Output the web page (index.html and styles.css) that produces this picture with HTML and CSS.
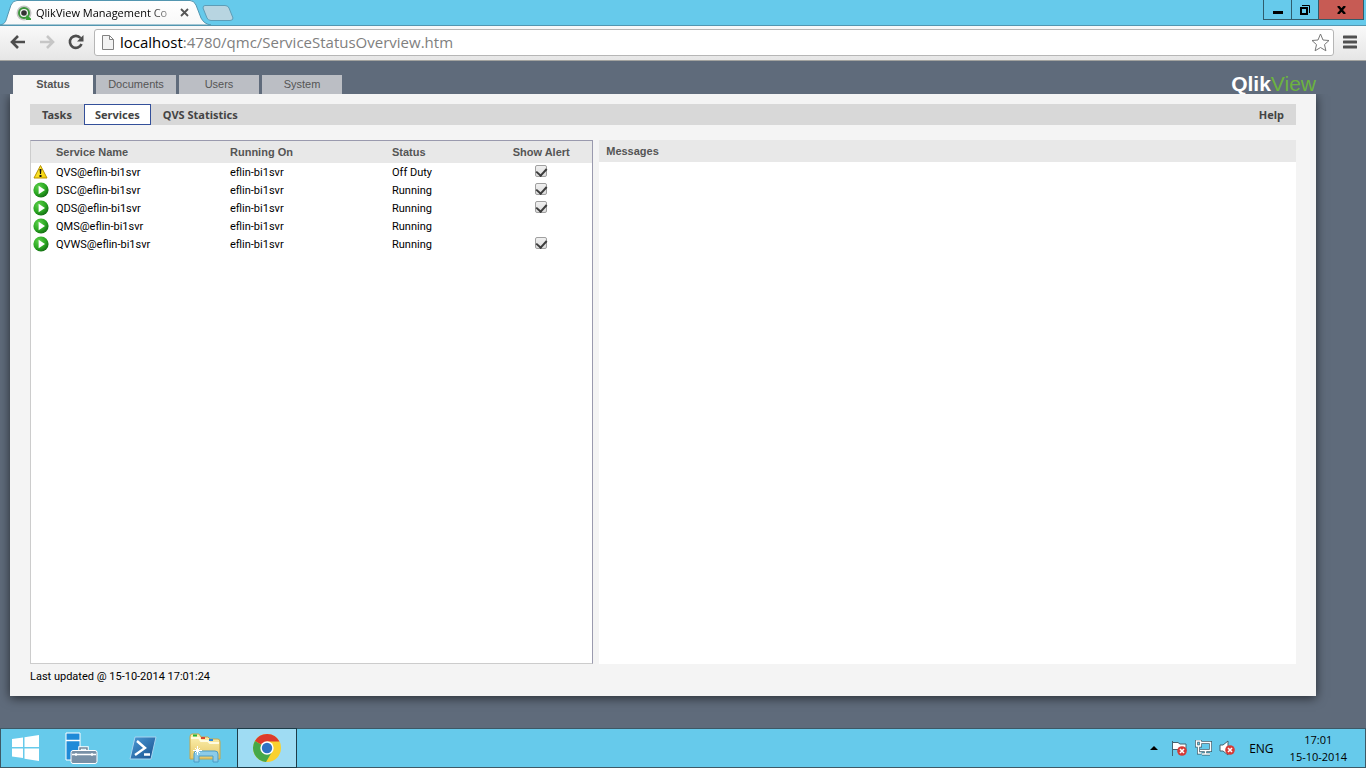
FILE: index.html
```html
<!DOCTYPE html>
<html lang="en">
<head>
<meta charset="utf-8">
<title>QlikView Management Console</title>
<link rel="stylesheet" href="styles.css">
</head>
<body>
<svg class="defs" width="0" height="0" aria-hidden="true">
  <defs>
    <radialGradient id="green" cx=".35" cy=".3" r=".75"><stop offset="0" stop-color="#5cd04a"/><stop offset=".6" stop-color="#2ba822"/><stop offset="1" stop-color="#126b12"/></radialGradient>
    <linearGradient id="yellow" x1="0" y1="0" x2="1" y2="1"><stop offset="0" stop-color="#fff04a"/><stop offset="1" stop-color="#f5d000"/></linearGradient>
    <linearGradient id="strip" x1="0" y1="0" x2="0" y2="1"><stop offset="0" stop-color="#fff"/><stop offset="1" stop-color="#f8f8f8"/></linearGradient>
    <linearGradient id="ps" x1="0" y1="0" x2="1" y2="1"><stop offset="0" stop-color="#4b9bd8"/><stop offset="1" stop-color="#174f8c"/></linearGradient>
    <linearGradient id="folder" x1="0" y1="0" x2="0" y2="1"><stop offset="0" stop-color="#fdf3b4"/><stop offset="1" stop-color="#e6c766"/></linearGradient>
    <symbol id="play" viewBox="0 0 16 16"><circle cx="8" cy="8" r="7.6" fill="url(#green)"/><path d="M5.6 3.8v8.4L12 8z" fill="#fff"/></symbol>
    <symbol id="error" viewBox="0 0 10 10"><circle cx="5" cy="5" r="4.8" fill="#d63a35"/><path d="M3 3l4 4M7 3L3 7" stroke="#fff" stroke-width="1.6"/></symbol>
  </defs>
</svg>

<header class="browser">
  <div class="tabstrip">
    <div class="browser-tab">
      <svg class="tab-shape" width="214" height="25" viewBox="0 0 214 25"><path d="M0 25C6 24 6 20 8 14L11 5Q13 .5 17 .5H190Q194 .5 196 5L201 18Q204 24 211 25z" fill="url(#strip)" stroke="#5396b0"/></svg>
      <svg class="favicon" width="16" height="16" viewBox="0 0 16 16"><circle cx="8" cy="8" r="7.500" fill="#c4c4c4"/><circle cx="8" cy="8" r="5" fill="#f5f5f5" stroke="#3c963c" stroke-width="2"/><path d="M10.500 10l4.500 3.500v1.500h-5" fill="#35a035"/><circle cx="8" cy="8" r="2.800" fill="#333"/></svg>
      <span class="tab-title">QlikView Management Co</span>
      <button class="tab-close" aria-label="Close tab"><svg width="9" height="9" viewBox="0 0 9 9"><path d="M1 1l7 7M8 1L1 8" stroke="#555" stroke-width="1.800"/></svg></button>
    </div>
    <button class="new-tab" aria-label="New tab"><svg width="32" height="16" viewBox="0 0 32 16"><path d="M3 .5H23Q26 .5 27 3L31 13Q31 15.500 28 15.500H9Q6 15.500 5 13L1 3Q1 .5 3 .5z" fill="#b8d5e1" stroke="#5d9db7"/></svg></button>
    <div class="window-controls">
      <button aria-label="Minimize"><svg width="10" height="10" viewBox="0 0 10 10"><path d="M0 6h10v3H0z"/></svg></button>
      <button aria-label="Restore"><svg width="10" height="10" viewBox="0 0 10 10"><path d="M1 3h6v6H1z" fill="none" stroke="#000" stroke-width="2"/><path d="M2 .5h7.500V8" fill="none" stroke="#000"/></svg></button>
      <button class="close" aria-label="Close"><svg width="9" height="8" viewBox="0 0 9 8"><path d="M1 0l7 8M8 0L1 8" stroke="#000" stroke-width="2.400"/></svg></button>
    </div>
  </div>
  <div class="toolbar">
    <button class="tool" aria-label="Back"><svg width="16" height="14" viewBox="0 0 16 14"><path d="M8 1L2 7l6 6M2 7h13" fill="none" stroke="#4d4d4d" stroke-width="2.600"/></svg></button>
    <button class="tool" aria-label="Forward"><svg width="16" height="14" viewBox="0 0 16 14"><path d="M8 1l6 6-6 6M14 7H1" fill="none" stroke="#c6c6c6" stroke-width="2.600"/></svg></button>
    <button class="tool" aria-label="Reload"><svg width="16" height="16" viewBox="0 0 16 16"><path d="M12.500 4A6 6 0 1 0 13.500 10" fill="none" stroke="#4d4d4d" stroke-width="2.600"/><path d="M15.500 1v6.500H9z" fill="#4d4d4d"/></svg></button>
    <div class="omnibox">
      <svg width="12" height="15" viewBox="0 0 12 15"><path d="M.5.5h7l4 4v10H.5zM7.500.5v4h4" fill="#f3f3f3" stroke="#828282"/></svg>
      <a class="url" href="#"><b>localhost</b>:4780/qmc/ServiceStatusOverview.htm</a>
      <button class="star" aria-label="Bookmark"><svg width="19" height="19" viewBox="0 0 19 19"><path d="M9.500 1l2.500 6 6 .5-4.500 4.100 1.400 6.200-5.400-3.300-5.400 3.300 1.400-6.200L1 7.500 7 7z" fill="#fff" stroke="#777" stroke-linejoin="round"/></svg></button>
    </div>
    <button class="menu" aria-label="Menu"><svg width="14" height="14" viewBox="0 0 14 14"><path d="M1 2h12M1 7h12M1 12h12" stroke="#505050" stroke-width="3" stroke-linecap="round"/></svg></button>
  </div>
</header>

<main class="page">
  <div class="top">
    <nav class="tabs">
      <a class="tab active" href="#">Status</a>
      <a class="tab" href="#">Documents</a>
      <a class="tab" href="#">Users</a>
      <a class="tab" href="#">System</a>
    </nav>
    <div class="logo"><b>Qlik</b><span>View</span></div>
  </div>
  <section class="panel">
    <nav class="subnav">
      <a href="#">Tasks</a>
      <a class="current" href="#">Services</a>
      <a href="#">QVS Statistics</a>
      <a class="help" href="#">Help</a>
    </nav>
    <div class="columns">
      <div class="services">
        <table>
          <colgroup><col class="c-icon"><col class="c-name"><col class="c-host"><col class="c-status"><col class="c-alert"></colgroup>
          <thead><tr><th></th><th>Service Name</th><th>Running On</th><th>Status</th><th class="alert">Show Alert</th></tr></thead>
          <tbody>
            <tr><td><svg width="16" height="16" viewBox="0 0 16 16"><path d="M7.500 1.500L14 14H1z" fill="url(#yellow)" stroke="#b99300" stroke-linejoin="round"/><path d="M6.500 5h2L8 10H7zM6.500 11h2v2h-2z" fill="#111"/></svg></td><td>QVS@eflin-bi1svr</td><td>eflin-bi1svr</td><td>Off Duty</td><td class="alert"><input type="checkbox" aria-label="Show alert for QVS" checked></td></tr>
            <tr><td><svg width="16" height="16"><use href="#play"/></svg></td><td>DSC@eflin-bi1svr</td><td>eflin-bi1svr</td><td>Running</td><td class="alert"><input type="checkbox" aria-label="Show alert for DSC" checked></td></tr>
            <tr><td><svg width="16" height="16"><use href="#play"/></svg></td><td>QDS@eflin-bi1svr</td><td>eflin-bi1svr</td><td>Running</td><td class="alert"><input type="checkbox" aria-label="Show alert for QDS" checked></td></tr>
            <tr><td><svg width="16" height="16"><use href="#play"/></svg></td><td>QMS@eflin-bi1svr</td><td>eflin-bi1svr</td><td>Running</td><td></td></tr>
            <tr><td><svg width="16" height="16"><use href="#play"/></svg></td><td>QVWS@eflin-bi1svr</td><td>eflin-bi1svr</td><td>Running</td><td class="alert"><input type="checkbox" aria-label="Show alert for QVWS" checked></td></tr>
          </tbody>
        </table>
      </div>
      <div class="messages"><h2>Messages</h2></div>
    </div>
    <p class="updated">Last updated @ 15-10-2014 17:01:24</p>
  </section>
</main>

<footer class="taskbar">
  <button class="start" aria-label="Start"><svg width="28" height="26" viewBox="0 0 28 26"><path d="M0 4l11-1.500V12H0zM12.500 2.200L27 0v12H12.500zM0 13.500h11V23L0 21.500zM12.500 13.500H27V26l-14.500-2.200z" fill="#fff"/></svg></button>
  <button class="app" aria-label="Server Manager"><svg width="34" height="32" viewBox="0 0 34 32"><path d="M2 1h14v27H2z" fill="#1f8ad8" stroke="#fff"/><path d="M2 8.500h14" stroke="#fff" stroke-width="1.500"/><path d="M16 19v-3h7v3" fill="none" stroke="#fff" stroke-width="3.500"/><path d="M16 19v-3h7v3" fill="none" stroke="#71869b" stroke-width="1.500"/><rect x="7" y="18.500" width="26" height="13" rx="2" fill="#7890a6" stroke="#fff"/><path d="M8 22.500h24M12 21v3M28 21v3" stroke="#fff" stroke-width="1.300"/></svg></button>
  <button class="app" aria-label="PowerShell"><svg width="28" height="24" viewBox="0 0 28 24"><path d="M6 1h21l-5 22H1z" fill="url(#ps)" stroke="#a8d4ef" stroke-linejoin="round"/><path d="M8 5l8 7-10 7M15 18.500h6" fill="none" stroke="#fff" stroke-width="2.400"/></svg></button>
  <button class="app" aria-label="File Explorer"><svg width="34" height="30" viewBox="0 0 34 30"><path d="M2 26V4q0-3 2-3h7l2 3h7l2 2h8q2 0 2 3v17z" fill="url(#folder)" stroke="#c6a64b"/><path d="M3 5h8l2 3h7l2 2h9" fill="none" stroke="#fffbe0" stroke-width="2"/><path d="M5 2.500h4" stroke="#1fb53a" stroke-width="2"/><path d="M13 5h4" stroke="#d8452e" stroke-width="2"/><path d="M21 7h4" stroke="#2888e0" stroke-width="2"/><path d="M6 29V21q0-3 3-3h18q3 0 3 3v8h-5v-6H11v6z" fill="#8ccbe8" stroke="#4a9cc6"/><path d="M9.500 13v9M5 17.500h9M7 15l5 5M12 15l-5 5" stroke="#fff"/></svg></button>
  <button class="app running" aria-label="Chrome"><svg width="30" height="30" viewBox="0 0 30 30"><circle cx="15" cy="15" r="14" fill="#f9d12f"/><path d="M15 15L2.900 8A14 14 0 0 1 27.500 8.500H15z" fill="#dc3a2c"/><path d="M15 15L2.900 8A14 14 0 0 0 14 29l6.500-11z" fill="#45a849"/><circle cx="15" cy="15" r="6.700" fill="#fff"/><circle cx="15" cy="15" r="5.200" fill="#2e72c4"/></svg></button>
  <div class="tray">
    <svg width="8" height="4" viewBox="0 0 8 4"><path d="M0 4l4-4 4 4z"/></svg>
    <svg width="17" height="17" viewBox="0 0 17 17"><path d="M1.500 1v15M2 2.500h5l2 1.500h6v7H9L7 9.500H2" fill="#fff" stroke="#45636f"/><use href="#error" x="6" y="6" width="10" height="10"/></svg>
    <svg width="17" height="16" viewBox="0 0 17 16"><path d="M6 2.500h9.500v8H5M10.500 10.500v3M7 14h8M1.500 1h4v5h-4zM3.500 6v7h3" fill="none" stroke="#395d6b" stroke-width="3"/><path d="M6 2.500h9.500v8H5M10.500 10.500v3M7 14h8M1.500 1h4v5h-4zM3.500 6v7h3" fill="none" stroke="#fff" stroke-width="1.500"/></svg>
    <svg width="17" height="16" viewBox="0 0 17 16"><path d="M1 5h3l5-4v14l-5-4H1z" fill="#fff" stroke="#45636f"/><use href="#error" x="6" y="5" width="10" height="10"/></svg>
    <span class="lang">ENG</span>
    <div class="clock"><span>17:01</span><span>15-10-2014</span></div>
  </div>
</footer>
</body>
</html>
```

FILE: styles.css
```css
* { box-sizing: border-box; }
body {
  margin: 0;
  min-height: 100vh;
  display: flex;
  flex-direction: column;
  background: #5f6b7b;
  font-family: Roboto, "Noto Sans", sans-serif;
  font-size: 11px;
  color: #000;
}
button { border: 0; padding: 0; background: none; font: inherit; display: flex; align-items: center; justify-content: center; }
a { color: inherit; text-decoration: none; }
svg { display: block; flex: none; }
.defs { position: absolute; }

.browser { background: #66caeb; }
.tabstrip { display: flex; height: 25px; }
.browser-tab { position: relative; display: flex; align-items: center; width: 202px; padding-left: 16px; }
.tab-shape { position: absolute; left: 0; top: 0; }
.favicon, .tab-title, .tab-close { position: relative; }
.tab-title {
  width: 140px;
  margin-left: 4px;
  white-space: nowrap;
  font: 11px "Open Sans", sans-serif;
  -webkit-mask-image: linear-gradient(to right, #000 112px, transparent 145px);
  mask-image: linear-gradient(to right, #000 112px, transparent 145px);
}
.tab-close { margin-left: 4px; }
.new-tab { align-self: flex-start; margin-top: 5px; }
.window-controls { display: flex; height: 20px; margin-left: auto; margin-right: 2px; border: 1px solid #2f5d6d; border-top: 0; }
.window-controls button { width: 27px; }
.window-controls button + button { border-left: 1px solid #2f5d6d; }
.window-controls .close { width: 45px; background: #c75b54; }
.toolbar {
  display: flex;
  align-items: center;
  height: 36px;
  padding: 0 8px 2px 9px;
  border-top: 1px solid #5396b0;
  border-bottom: 1px solid #a3a39f;
  background: linear-gradient(#f9f9f9, #e6e6e6);
}
.tool { width: 17px; margin-right: 12px; }
.omnibox {
  flex: 1;
  display: flex;
  align-items: center;
  height: 27px;
  margin-left: -2px;
  padding: 0 3px 0 7px;
  border: 1px solid #b6b6b6;
  border-radius: 3px;
  background: #fff;
}
.url { flex: 1; margin-left: 6px; font: 15px "Open Sans", sans-serif; color: #808080; }
.url b { font-weight: 400; color: #000; }
.menu { width: 16px; margin-left: 8px; }

.page { flex: 1; display: flex; flex-direction: column; padding: 14px 50px 32px 10px; }
.top { display: flex; justify-content: space-between; height: 19px; padding-left: 3px; }
.tabs { display: flex; gap: 3px; }
.tab { width: 80px; background: #bbbec4; color: #555; font: 11px/19px "Liberation Sans", sans-serif; text-align: center; }
.tab.active { background: #f4f4f4; font-weight: 700; }
.logo { font: 21px/17px "Liberation Sans", sans-serif; color: #fff; }
.logo span { color: #6cb33f; }
.panel {
  flex: 1;
  display: flex;
  flex-direction: column;
  padding: 10px 20px 12px;
  background: #f4f4f4;
  box-shadow: 0 2px 10px rgba(0, 0, 0, .6);
  clip-path: inset(0 -16px -16px -16px);
}
.subnav { display: flex; height: 21px; margin-bottom: 15px; background: #d8d8d8; color: #444; font: 700 11px/21px "Noto Sans", sans-serif; }
.subnav a { padding: 0 12px; }
.subnav .current { padding: 0 10px; border: 1px solid #34509a; background: #fff; line-height: 19px; }
.subnav .help { margin-left: auto; }
.columns { flex: 1; display: flex; gap: 6px; }
.services { flex: 563 1 0; border: 1px solid #ccc; border-top-color: #9a9aae; border-right-color: #9a9aae; background: #fff; }
.messages { flex: 699 1 0; background: #fff; }
table { width: 100%; table-layout: fixed; border-collapse: collapse; }
.c-icon { width: 25px; }
.c-name { width: 174px; }
.c-host { width: 162px; }
.c-alert { width: 102px; }
th, td { height: 18px; padding: 0; text-align: left; }
td { padding-top: 1px; line-height: 17px; }
td:first-child, td.alert { padding-top: 0; }
td svg { margin-left: 2px; }
thead { background: #e8e8e8; }
th, .messages h2 { height: 22px; color: #555; font: 700 11px/22px "Liberation Sans", sans-serif; }
th.alert, td.alert { text-align: center; }
.alert input {
  appearance: none;
  display: block;
  width: 12px;
  height: 12px;
  margin: 0 auto 2px;
  border: 1px solid #a0a0a0;
  border-radius: 2px;
  background: linear-gradient(#f0f0f0, #dcdcdc);
}
.alert input:checked::after {
  content: "";
  display: block;
  width: 5px;
  height: 8px;
  margin: 0 2px;
  border: solid #3c3c3c;
  border-width: 0 2px 2px 0;
  transform: rotate(42deg);
}
.messages h2 { margin: 0; padding-left: 7px; background: #e8e8e8; }
.updated { margin: 5px 0 0; line-height: 15px; }

.taskbar { display: flex; height: 40px; border: 1px solid #3d5966; background: #66caeb; }
.start { width: 49px; }
.app { width: 62px; }
.app.running { width: 60px; margin: -1px 0 -1px 1px; border: 1px solid #1e3c48; background: #9fdcf3; }
.tray { display: flex; align-items: center; gap: 7px; margin-left: auto; padding-right: 18px; font: 11px "Open Sans", sans-serif; }
.tray > svg:first-child { margin-right: 6px; }
.lang { margin-left: 6px; font-size: 12px; }
.clock { display: flex; flex-direction: column; align-items: center; margin-left: 9px; line-height: 17px; }
```
